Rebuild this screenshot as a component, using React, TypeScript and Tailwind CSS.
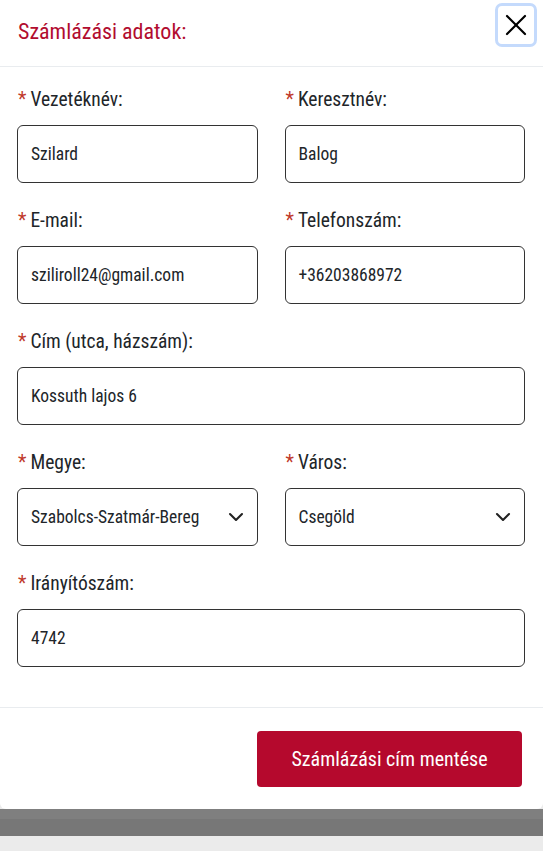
import { ChevronDown, X } from "lucide-react";

const font = { fontFamily: "'Roboto Condensed', Roboto, 'Liberation Sans Narrow', sans-serif" };

function Label({ text }: { text: string }) {
  return (
    <label className="block text-[19.5px] leading-6 text-[#212529] mb-[13px] pl-px">
      <span className="text-[#c0392b] mr-[4px]">*</span>
      {text}
    </label>
  );
}

function Field({ label, value }: { label: string; value: string }) {
  return (
    <div className="mb-[26px]">
      <Label text={label} />
      <div className="h-[58px] border border-[#333] rounded-[6px] flex items-center px-[13px] text-[17.5px] text-[#212529]">
        {value}
      </div>
    </div>
  );
}

function Select({ label, value }: { label: string; value: string }) {
  return (
    <div className="mb-[26px]">
      <Label text={label} />
      <div className="h-[58px] border border-[#333] rounded-[6px] flex items-center justify-between pl-[13px] pr-[9px] text-[17.5px] text-[#212529]">
        <span>{value}</span>
        <ChevronDown size={24} strokeWidth={2.1} className="text-[#222]" />
      </div>
    </div>
  );
}

export default function App() {
  return (
    <div className="w-[543px] h-[865px] bg-[#ebebeb] flex flex-col font-stretch-condensed" style={font}>
      <div className="bg-white rounded-b-[6px] flex flex-col">
        <div className="h-[67px] border-b border-[#e9ecef] flex items-start justify-between pl-[18px] pr-[6px]">
          <h2 className="text-[22px] leading-none text-[#b20c2f] mt-[21px]">Számlázási adatok:</h2>
          <button className="mt-[3px] w-[42px] h-[44px] rounded-[7px] border-[3px] border-[#c4dafc] flex items-center justify-center">
            <X size={38} strokeWidth={1.45} className="text-black" />
          </button>
        </div>
        <div className="px-[17px] pr-[18px] pt-[21px] pb-[14px]">
          <div className="grid grid-cols-2 gap-x-[27px]">
            <Field label="Vezetéknév:" value="Szilard" />
            <Field label="Keresztnév:" value="Balog" />
            <Field label="E-mail:" value="sziliroll24@gmail.com" />
            <Field label="Telefonszám:" value="+36203868972" />
          </div>
          <Field label="Cím (utca, házszám):" value="Kossuth lajos 6" />
          <div className="grid grid-cols-2 gap-x-[27px]">
            <Select label="Megye:" value="Szabolcs-Szatmár-Bereg" />
            <Select label="Város:" value="Csegöld" />
          </div>
          <Field label="Irányítószám:" value="4742" />
        </div>
        <div className="border-t border-[#e9ecef] h-[102px] flex items-center justify-end pr-[21px]">
          <button className="w-[265px] h-[56px] rounded-[4px] bg-[#b5092d] text-white text-[20px]">
            Számlázási cím mentése
          </button>
        </div>
      </div>
      <div className="h-[10px] bg-[#7f7f7f]" />
      <div className="h-[17px] bg-[#777777]" />
      <div className="h-[15px] bg-[#ebebeb]" />
      <div className="flex-1 bg-white" />
    </div>
  );
}
